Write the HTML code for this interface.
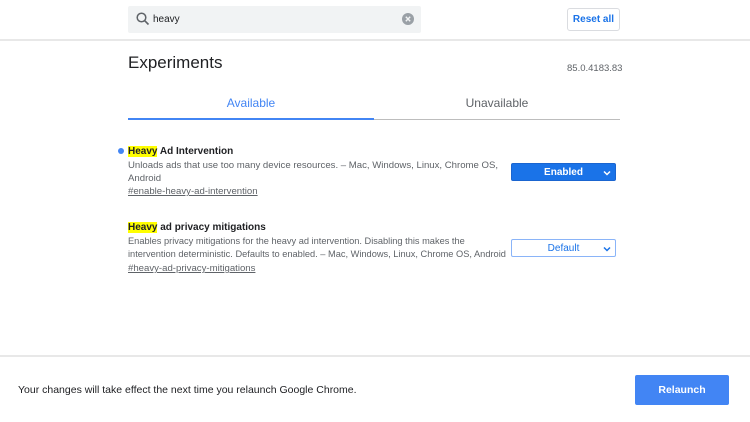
<!DOCTYPE html>
<html><head><meta charset="utf-8"><style>
*{margin:0;padding:0;box-sizing:border-box}
body{width:750px;height:422px;background:#fff;font-family:"Liberation Sans",Arial,sans-serif;position:relative;overflow:hidden;color:#202124}
.abs{position:absolute}
.search{left:128px;top:6px;width:293px;height:27px;background:#f1f3f4;border-radius:2px}
.hdrline{left:0;top:39px;width:750px;height:2px;background:#e8e8e8}
.reset{left:567px;top:8px;width:53px;height:23px;border:1px solid #dadce0;border-radius:3px;color:#1a73e8;font-size:10px;font-weight:bold;text-align:center;line-height:21px}
.t{font-size:11px;line-height:13px}
.desc{color:#5f6368;font-size:9.6px;line-height:13px;white-space:nowrap}
.link{color:#5f6368;font-size:9.6px;text-decoration:underline}
.hl{background:#ffff00}
.sel{width:105px;height:18px;border-radius:2px;font-size:10px;text-align:center;line-height:17px}
.sel svg{position:absolute;right:4px;top:6px}
</style></head><body>
<div class="abs search">
<svg class="abs" style="left:8px;top:6px" width="14" height="14" viewBox="0 0 14 14"><circle cx="5.5" cy="5.5" r="4.3" fill="none" stroke="#5f6368" stroke-width="1.5"/><line x1="8.6" y1="8.6" x2="12.5" y2="12.5" stroke="#5f6368" stroke-width="1.6"/></svg>
<div class="abs" style="left:25px;top:8px;font-size:10px;color:#202124">heavy</div>
<svg class="abs" style="left:274px;top:7px" width="12" height="12" viewBox="0 0 12 12"><circle cx="6" cy="6" r="6" fill="#9aa0a6"/><path d="M3.8 3.8L8.2 8.2M8.2 3.8L3.8 8.2" stroke="#f1f3f4" stroke-width="1.4"/></svg>
</div>
<div class="abs reset">Reset all</div>
<div class="abs hdrline"></div>
<div class="abs" style="left:128px;top:53px;font-size:17px;color:#202124">Experiments</div>
<div class="abs" style="left:567px;top:63px;font-size:9.5px;color:#5f6368">85.0.4183.83</div>
<div class="abs" style="left:128px;top:96px;width:246px;text-align:center;font-size:12px;color:#4285f4">Available</div>
<div class="abs" style="left:374px;top:96px;width:246px;text-align:center;font-size:12px;color:#5f6368">Unavailable</div>
<div class="abs" style="left:128px;top:118px;width:246px;height:2px;background:#4285f4"></div>
<div class="abs" style="left:374px;top:119px;width:246px;height:1px;background:#bdbdbd"></div>

<div class="abs" style="left:118px;top:148px;width:6px;height:6px;border-radius:50%;background:#4285f4"></div>
<div class="abs t" style="left:128px;top:145px;font-weight:bold;font-size:10px"><span class="hl">Heavy</span> Ad Intervention</div>
<div class="abs desc" style="left:128px;top:159px">Unloads ads that use too many device resources. – Mac, Windows, Linux, Chrome OS,<br>Android</div>
<div class="abs link" style="left:128px;top:186px">#enable-heavy-ad-intervention</div>
<div class="abs sel" style="left:511px;top:163px;background:#1a73e8;color:#fff;font-weight:bold;border:1px solid #1a65d0">Enabled<svg width="8" height="6" viewBox="0 0 8 6"><path d="M1 1.5L4 4.5L7 1.5" fill="none" stroke="#fff" stroke-width="1.5"/></svg></div>

<div class="abs t" style="left:128px;top:221px;font-weight:bold;font-size:10px"><span class="hl">Heavy</span> ad privacy mitigations</div>
<div class="abs desc" style="left:128px;top:235px;font-size:9.25px">Enables privacy mitigations for the heavy ad intervention. Disabling this makes the<br>intervention deterministic. Defaults to enabled. – Mac, Windows, Linux, Chrome OS, Android</div>
<div class="abs link" style="left:128px;top:263px">#heavy-ad-privacy-mitigations</div>
<div class="abs sel" style="left:511px;top:239px;background:#fff;color:#1a73e8;border:1px solid #8ab4f8">Default<svg width="8" height="6" viewBox="0 0 8 6"><path d="M1 1.5L4 4.5L7 1.5" fill="none" stroke="#1a73e8" stroke-width="1.5"/></svg></div>

<div class="abs" style="left:0;top:355px;width:750px;height:2px;background:#e8e8e8"></div>
<div class="abs" style="left:18px;top:384px;font-size:10.5px;color:#202124">Your changes will take effect the next time you relaunch Google Chrome.</div>
<div class="abs" style="left:635px;top:375px;width:94px;height:30px;background:#4285f4;border-radius:2px;color:#fff;font-size:10.5px;font-weight:bold;text-align:center;line-height:30px">Relaunch</div>
</body></html>
